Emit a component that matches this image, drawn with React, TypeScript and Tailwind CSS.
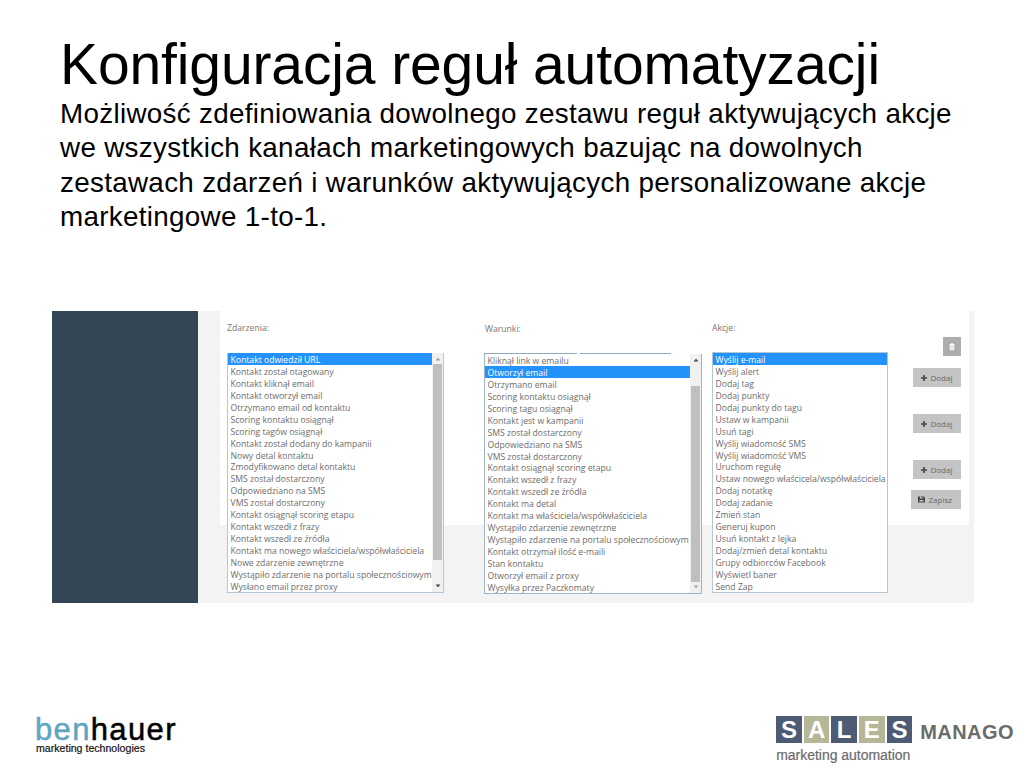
import { clsx } from "clsx";

const events = [
  "Kontakt odwiedził URL",
  "Kontakt został otagowany",
  "Kontakt kliknął email",
  "Kontakt otworzył email",
  "Otrzymano email od kontaktu",
  "Scoring kontaktu osiągnął",
  "Scoring tagów osiągnął",
  "Kontakt został dodany do kampanii",
  "Nowy detal kontaktu",
  "Zmodyfikowano detal kontaktu",
  "SMS został dostarczony",
  "Odpowiedziano na SMS",
  "VMS został dostarczony",
  "Kontakt osiągnął scoring etapu",
  "Kontakt wszedł z frazy",
  "Kontakt wszedł ze źródła",
  "Kontakt ma nowego właściciela/współwłaściciela",
  "Nowe zdarzenie zewnętrzne",
  "Wystąpiło zdarzenie na portalu społecznościowym",
  "Wysłano email przez proxy",
];

const conditions = [
  "Kliknął link w emailu",
  "Otworzył email",
  "Otrzymano email",
  "Scoring kontaktu osiągnął",
  "Scoring tagu osiągnął",
  "Kontakt jest w kampanii",
  "SMS został dostarczony",
  "Odpowiedziano na SMS",
  "VMS został dostarczony",
  "Kontakt osiągnął scoring etapu",
  "Kontakt wszedł z frazy",
  "Kontakt wszedł ze źródła",
  "Kontakt ma detal",
  "Kontakt ma właściciela/współwłaściciela",
  "Wystąpiło zdarzenie zewnętrzne",
  "Wystąpiło zdarzenie na portalu społecznościowym",
  "Kontakt otrzymał ilość e-maili",
  "Stan kontaktu",
  "Otworzył email z proxy",
  "Wysyłka przez Paczkomaty",
];

const actions = [
  "Wyślij e-mail",
  "Wyślij alert",
  "Dodaj tag",
  "Dodaj punkty",
  "Dodaj punkty do tagu",
  "Ustaw w kampanii",
  "Usuń tagi",
  "Wyślij wiadomość SMS",
  "Wyślij wiadomość VMS",
  "Uruchom regułę",
  "Ustaw nowego właścicela/współwłaściciela",
  "Dodaj notatkę",
  "Dodaj zadanie",
  "Zmień stan",
  "Generuj kupon",
  "Usuń kontakt z lejka",
  "Dodaj/zmień detal kontaktu",
  "Grupy odbiorców Facebook",
  "Wyświetl baner",
  "Send Zap",
];

function Options({ items, selected }: { items: string[]; selected: number }) {
  return (
    <ul className="min-w-0 flex-1">
      {items.map((item, i) => (
        <li
          key={item}
          className={clsx(
            "h-[11.94px] whitespace-nowrap pl-[2.5px] leading-[14px]",
            i === selected ? "bg-[#2492fb] text-white" : "text-[#6d6d6d]"
          )}
        >
          {item}
        </li>
      ))}
    </ul>
  );
}

function Arrow({ up, dark }: { up?: boolean; dark?: boolean }) {
  return (
    <svg
      viewBox="0 0 6 4"
      className={clsx("mx-auto h-[4px] w-[6px] shrink-0", dark ? "fill-[#444]" : "fill-[#a0a0a0]")}
    >
      <path d={up ? "M.5 3.5 3 .8l2.5 2.7z" : "M.5.5h5L3 3.2z"} />
    </svg>
  );
}

function Scrollbar({ thumb, atTop }: { thumb: string; atTop?: boolean }) {
  return (
    <div className="flex w-[11px] shrink-0 flex-col bg-[#f1f1f1] py-[4px]">
      <Arrow up dark={!atTop} />
      <div className={clsx("mx-[1px] shrink-0 bg-[#bfbfbf]", thumb)} />
      <div className="flex-1" />
      <Arrow dark={atTop} />
    </div>
  );
}

function PlusIcon() {
  return (
    <svg viewBox="0 0 6 6" className="h-[6px] w-[6px] fill-[#444]">
      <path d="M2.2 0h1.6v2.2H6v1.6H3.8V6H2.2V3.8H0V2.2h2.2z" />
    </svg>
  );
}

function SaveIcon() {
  return (
    <svg viewBox="0 0 7 7" className="h-[7px] w-[7px]">
      <path d="M0 .5h6l1 1V6.5H0z" fill="#444" />
      <path d="M2 .5h2.8v2H2zM1.5 4h4v1.5h-4z" fill="#c4c4c4" />
      <path d="M3.7.5h.8V2h-.8z" fill="#444" />
    </svg>
  );
}

function TrashIcon() {
  return (
    <svg viewBox="0 0 6 8" className="h-[7px] w-[6px]">
      <path d="M2 0h2v1h2v1.2H0V1h2zM.5 2.6h5V7q0 1-1 1h-3q-1 0-1-1z" fill="#fff" />
      <path d="M2 3.5v3.4M4 3.5v3.4" stroke="#adadad" strokeWidth=".6" />
    </svg>
  );
}

function AddButton({ className }: { className?: string }) {
  return (
    <button
      className={clsx(
        "flex h-[19px] w-[48px] items-center gap-[4px] bg-[#c4c4c4] pl-[7.5px] text-[8px] text-[#686868]",
        className
      )}
    >
      <PlusIcon />
      Dodaj
    </button>
  );
}

const letters = [
  { char: "S", dark: true },
  { char: "A", dark: false },
  { char: "L", dark: true },
  { char: "E", dark: false },
  { char: "S", dark: true },
];

export default function App() {
  return (
    <div className="flex h-[768px] w-[1024px] flex-col overflow-hidden bg-white font-['Liberation_Sans',Arial,sans-serif] text-black">
      <header className="h-[311px] pl-[60px] pt-[31px]">
        <h1 className="h-[66px] whitespace-nowrap text-[57px] leading-[66px] tracking-[-0.12px]">
          Konfiguracja reguł automatyzacji
        </h1>
        <p className="whitespace-nowrap text-[27.8px] leading-[34.3px] tracking-[0.31px]">
          Możliwość zdefiniowania dowolnego zestawu reguł aktywujących akcje
          <br />
          we wszystkich kanałach marketingowych bazując na dowolnych
          <br />
          zestawach zdarzeń i warunków aktywujących personalizowane akcje
          <br />
          marketingowe 1-to-1.
        </p>
      </header>

      {/* Rule editor */}
      <main className="ml-[52px] flex h-[292px] w-[922px] shrink-0 bg-[#f3f3f3] font-['Open_Sans',sans-serif] text-[8.63px]">
        <aside className="w-[146px] bg-[#344556]" />
        <section className="ml-[22px] flex h-[214px] w-[749px] bg-white pl-[7px]">
          <div className="w-[217px]">
            <div className="h-[42px] pt-[11px] leading-[12px] text-[#777]">Zdarzenia:</div>
            <div className="flex h-[240px] border border-t-0 border-[#b5c7d6] bg-white">
              <Options items={events} selected={0} />
              <Scrollbar thumb="mt-[3px] h-[196px]" atTop />
            </div>
          </div>

          <div className="ml-[40px] w-[218px]">
            <div className="h-[42px] pt-[12px] pl-px leading-[12px] text-[#777]">Warunki:</div>
            <div className="flex gap-[3px]">
              <div className="h-px w-[93px] bg-[#8fa9bd]" />
              <div className="h-px w-[91px] bg-[#8fa9bd]" />
            </div>
            <div className="flex h-[240px] border border-t-0 border-[#9cb4c8] bg-white">
              <Options items={conditions} selected={1} />
              <Scrollbar thumb="mt-[24px] h-[196px]" />
            </div>
          </div>

          <div className="ml-[10px] w-[176px]">
            <div className="h-[41px] pt-[11px] leading-[12px] text-[#777]">Akcje:</div>
            <div className="h-[241px] border border-[#b5c7d6] bg-white">
              <Options items={actions} selected={0} />
            </div>
          </div>

          <div className="ml-auto mr-[8px] flex flex-col items-end pt-[26px]">
            <button className="flex h-[19px] w-[18px] items-center justify-center bg-[#adadad]">
              <TrashIcon />
            </button>
            <AddButton className="mt-[12px]" />
            <AddButton className="mt-[27px]" />
            <AddButton className="mt-[27px]" />
            <button className="mt-[11px] flex h-[19px] w-[50px] items-center gap-[3.5px] bg-[#c4c4c4] pl-[7px] text-[8px] text-[#686868]">
              <SaveIcon />
              Zapisz
            </button>
          </div>
        </section>
      </main>

      <footer className="flex justify-between pl-[35px] pr-[10px] pt-[112px]">
        <div>
          <div className="h-[27px] text-[31px] leading-[30px] tracking-[1.35px]">
            <span className="text-[#5fa5c1] [-webkit-text-stroke:0.5px_#5fa5c1]">ben</span>
            <span className="[-webkit-text-stroke:0.5px_#000]">hauer</span>
          </div>
          <div className="pl-px text-[10.6px] leading-[12px] text-[#111] [-webkit-text-stroke:0.2px_#111]">
            marketing technologies
          </div>
        </div>
        <div className="pt-px">
          <div className="flex items-center">
            <div className="flex gap-[2px]">
              {letters.map(({ char, dark }, i) => (
                <div
                  key={i}
                  className={clsx(
                    "flex h-[27px] w-[25.6px] items-center justify-center text-[24px] font-bold leading-none text-white",
                    dark ? "bg-[#4d5b75]" : "bg-[#b6b698]"
                  )}
                >
                  {char}
                </div>
              ))}
            </div>
            <div className="ml-[8px] pt-[5px] text-[20px] font-bold leading-none tracking-[0.45px] text-[#6b6b6b]">
              MANAGO
            </div>
          </div>
          <div className="mt-[4px] text-[14px] leading-[16px] tracking-[-0.03px] text-[#6b6b6b] [-webkit-text-stroke:0.2px_#6b6b6b]">
            marketing automation
          </div>
        </div>
      </footer>
    </div>
  );
}
